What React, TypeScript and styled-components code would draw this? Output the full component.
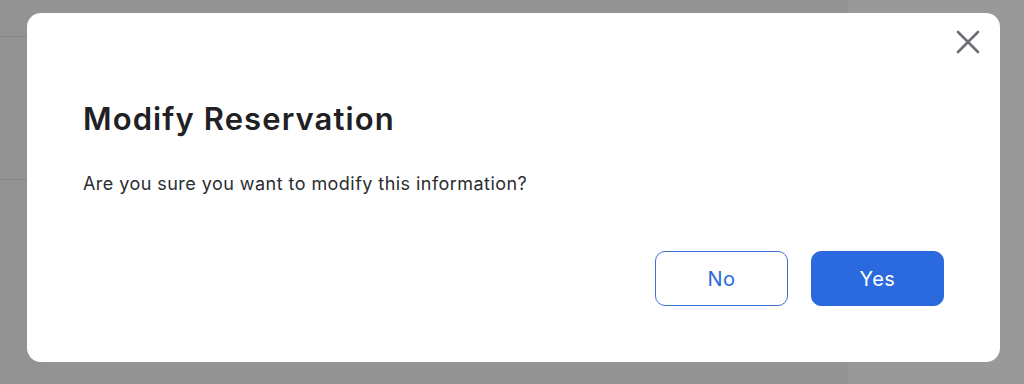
import React from "react";
import styled, { createGlobalStyle } from "styled-components";

const GlobalStyle = createGlobalStyle`
  html, body {
    margin: 0;
    padding: 0;
    width: 1024px;
    height: 384px;
    overflow: hidden;
    font-family: Inter, "Noto Sans", "Liberation Sans", sans-serif;
  }
  * { box-sizing: border-box; }
`;

const Page = styled.div`
  position: relative;
  width: 1024px;
  height: 384px;
  display: flex;
  background: #939393;
`;

const Main = styled.div`
  flex: 1;
  display: flex;
  flex-direction: column;
`;

const Band = styled.div<{ $h: number }>`
  height: ${(p) => p.$h}px;
  border-bottom: 1px solid #868686;
`;

const Side = styled.aside`
  width: 176px;
  background: #999999;
`;

const Overlay = styled.div`
  position: absolute;
  inset: 0;
  padding: 13px 24px 22px 27px;
  display: flex;
  align-items: flex-start;
`;

const Modal = styled.div`
  position: relative;
  width: 973px;
  height: 349px;
  background: #ffffff;
  border-radius: 14px;
  padding: 87px 56px 56px 56px;
  display: flex;
  flex-direction: column;
`;

const Close = styled.button`
  position: absolute;
  top: 15px;
  right: 18px;
  width: 28px;
  height: 28px;
  padding: 0;
  border: none;
  background: transparent;
  display: flex;
  align-items: center;
  justify-content: center;
  cursor: pointer;
`;

const Title = styled.h2`
  margin: 0;
  font-size: 31px;
  line-height: 38px;
  font-weight: 600;
  letter-spacing: 1.1px;
  color: #1f2124;
`;

const Message = styled.p`
  margin: 34px 0 0 0;
  font-size: 18px;
  line-height: 24px;
  font-weight: 400;
  letter-spacing: 0.45px;
  color: #2b2d30;
`;

const Actions = styled.div`
  margin-top: auto;
  display: flex;
  justify-content: flex-end;
  gap: 23px;
`;

const Button = styled.button<{ $primary?: boolean }>`
  width: 133px;
  height: 55px;
  border-radius: 10px;
  font-family: inherit;
  font-size: 20px;
  font-weight: 400;
  letter-spacing: 0.5px;
  cursor: pointer;
  border: 1.5px solid ${(p) => (p.$primary ? "#2b6ade" : "#3a73d6")};
  background: ${(p) => (p.$primary ? "#2b6ade" : "#ffffff")};
  color: ${(p) => (p.$primary ? "#ffffff" : "#2b6ade")};
`;

export default function App() {
  return (
    <>
      <GlobalStyle />
      <Page>
        <Main>
          <Band $h={37} />
          <Band $h={143} />
        </Main>
        <Side />
        <Overlay>
          <Modal>
            <Close aria-label="Close">
              <svg width="24" height="24" viewBox="0 0 24 24">
                <path
                  d="M2 2 L22 22 M22 2 L2 22"
                  stroke="#6b6f75"
                  strokeWidth="2.6"
                  strokeLinecap="round"
                />
              </svg>
            </Close>
            <Title>Modify Reservation</Title>
            <Message>Are you sure you want to modify this information?</Message>
            <Actions>
              <Button>No</Button>
              <Button $primary>Yes</Button>
            </Actions>
          </Modal>
        </Overlay>
      </Page>
    </>
  );
}
